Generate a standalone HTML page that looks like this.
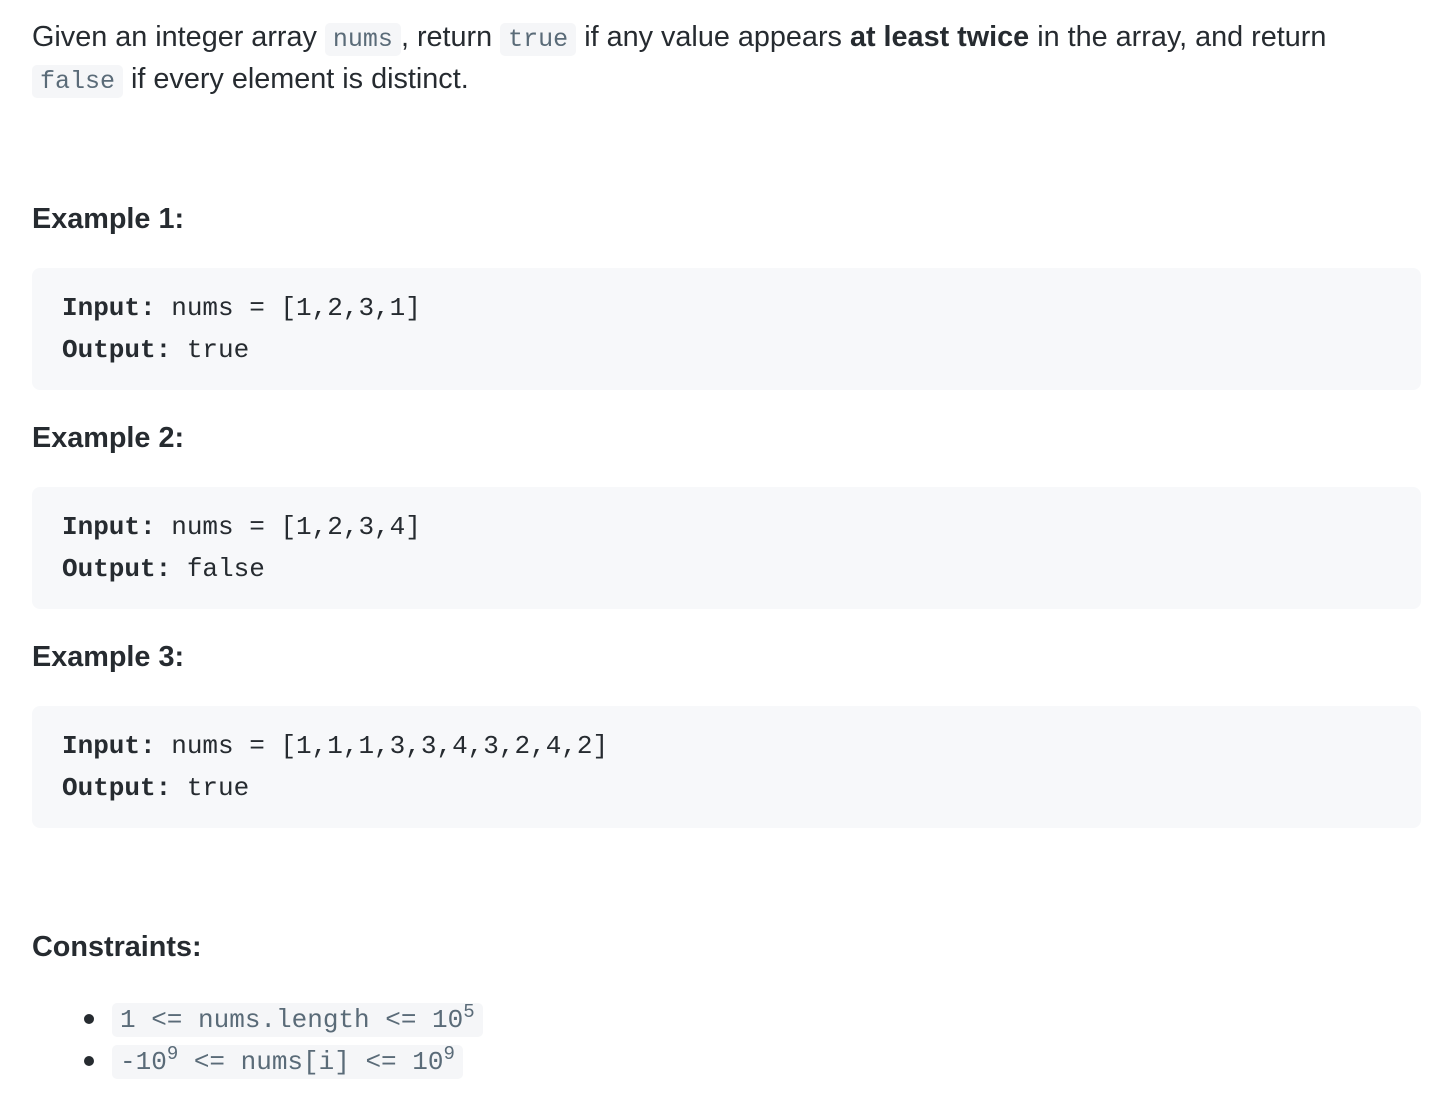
<!DOCTYPE html>
<html><head><meta charset="utf-8"><style>
html,body{margin:0;padding:0;background:#fff;width:1454px;height:1098px;overflow:hidden}
body{font-family:"Liberation Sans",sans-serif;color:#262b30;font-size:28.8px;position:relative}
.a{position:absolute;left:32px;white-space:nowrap;line-height:42px}
code{font-family:"Liberation Mono",monospace;font-size:25px;color:#5a6b78;background:#f5f6f8;border-radius:5px;padding:2px 8px}
h3{margin:0;font-size:28.8px;font-weight:bold}
.pre{position:absolute;left:32px;width:1389px;height:122px;background:#f7f8fa;border-radius:8px;font-family:"Liberation Mono",monospace;font-size:26px;color:#262b30}
.pre div{position:absolute;left:30px;line-height:42px;white-space:pre}
sup{font-size:19px;vertical-align:0;position:relative;top:-10px}
.li{position:absolute;left:84px;white-space:nowrap;line-height:42px}
.li code{font-size:26px}
.dot{display:inline-block;width:10px;height:10px;border-radius:50%;background:#262b30;margin-right:18px;vertical-align:middle}
</style></head><body>
<div class="a" style="top:16px">Given an integer array <code>nums</code>, return <code>true</code> if any value appears <b>at least twice</b> in the array, and return</div>
<div class="a" style="top:58px"><code>false</code> if every element is distinct.</div>
<div class="a" style="top:198px"><h3>Example 1:</h3></div>
<div class="pre" style="top:268px"><div style="top:19px"><b>Input:</b> nums = [1,2,3,1]</div><div style="top:61px"><b>Output:</b> true</div></div>
<div class="a" style="top:417px"><h3>Example 2:</h3></div>
<div class="pre" style="top:487px"><div style="top:19px"><b>Input:</b> nums = [1,2,3,4]</div><div style="top:61px"><b>Output:</b> false</div></div>
<div class="a" style="top:636px"><h3>Example 3:</h3></div>
<div class="pre" style="top:706px"><div style="top:19px"><b>Input:</b> nums = [1,1,1,3,3,4,3,2,4,2]</div><div style="top:61px"><b>Output:</b> true</div></div>
<div class="a" style="top:926px"><h3>Constraints:</h3></div>
<div class="li" style="top:997px"><span class="dot"></span><code>1 &lt;= nums.length &lt;= 10<sup>5</sup></code></div>
<div class="li" style="top:1039px"><span class="dot"></span><code>-10<sup>9</sup> &lt;= nums[i] &lt;= 10<sup>9</sup></code></div>
</body></html>
